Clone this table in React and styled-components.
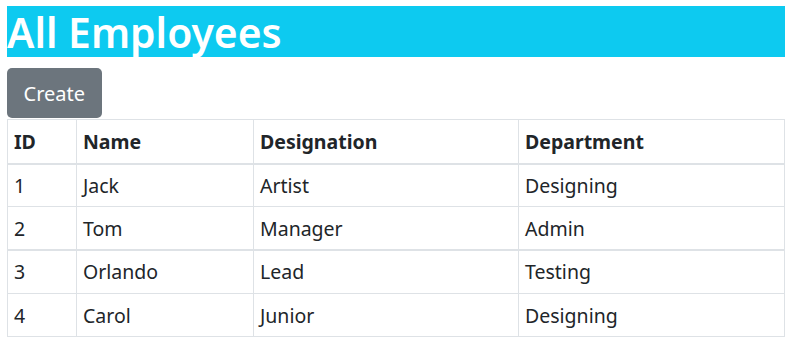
import styled, { createGlobalStyle } from "styled-components";

const GlobalStyle = createGlobalStyle`
  body {
    margin: 0;
    background: #fff;
    font-family: "Noto Sans", "Open Sans", sans-serif;
    color: #212529;
  }
  * {
    box-sizing: border-box;
  }
`;

const employees = [
  { id: 1, name: "Jack", designation: "Artist", department: "Designing" },
  { id: 2, name: "Tom", designation: "Manager", department: "Admin" },
  { id: 3, name: "Orlando", designation: "Lead", department: "Testing" },
  { id: 4, name: "Carol", designation: "Junior", department: "Designing" },
];

const App = () => {
  return (
    <Page>
      <GlobalStyle />
      <Heading>All Employees</Heading>
      <CreateButton>Create</CreateButton>
      <Table>
        <colgroup>
          <col style={{ width: 69 }} />
          <col style={{ width: 177 }} />
          <col style={{ width: 265 }} />
          <col />
        </colgroup>
        <thead>
          <tr>
            <HeadCell>ID</HeadCell>
            <HeadCell>Name</HeadCell>
            <HeadCell>Designation</HeadCell>
            <HeadCell>Department</HeadCell>
          </tr>
        </thead>
        <tbody>
          {employees.map((emp, i) => (
            <Row key={emp.id} $thick={i === 2}>
              <Cell>{emp.id}</Cell>
              <Cell>{emp.name}</Cell>
              <Cell>{emp.designation}</Cell>
              <Cell>{emp.department}</Cell>
            </Row>
          ))}
        </tbody>
      </Table>
    </Page>
  );
};

export default App;

const Page = styled.div`
  display: flex;
  flex-direction: column;
  align-items: flex-start;
  width: 778px;
  margin: 6px 0 0 7px;
`;

const Heading = styled.h1`
  align-self: stretch;
  margin: 0 0 11px;
  height: 51px;
  background: #0dcaf0;
  color: #fff;
  font-size: 40.8px;
  font-weight: 600;
  line-height: 52px;
  white-space: nowrap;
`;

const CreateButton = styled.button`
  height: 50px;
  padding: 0 16.5px;
  border: none;
  border-radius: 5px;
  background: #6c757d;
  color: #fff;
  font-family: "Noto Sans", "Open Sans", sans-serif;
  font-size: 20px;
  cursor: pointer;
`;

const Table = styled.table`
  margin-top: 1px;
  width: 100%;
  border-collapse: collapse;
  table-layout: fixed;
  border: 1px solid #dee2e6;
  font-size: 19.5px;
`;

const HeadCell = styled.th`
  height: 44px;
  padding: 0 6px;
  text-align: left;
  font-weight: 700;
  border: 1px solid #dee2e6;
  border-bottom: 2px solid #dee2e6;
  vertical-align: middle;
`;

const Row = styled.tr`
  border-top: ${(p) => (p.$thick ? "2px" : "1px")} solid #dee2e6;
`;

const Cell = styled.td`
  height: 43.3px;
  padding: 0 6px;
  border-left: 1px solid #dee2e6;
  border-right: 1px solid #dee2e6;
  vertical-align: middle;
`;
